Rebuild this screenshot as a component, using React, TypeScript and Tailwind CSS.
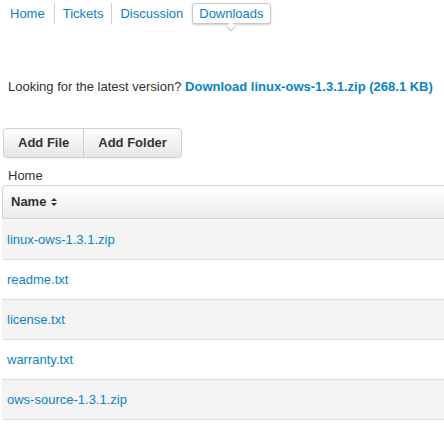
import React from "react";

const files = [
  "linux-ows-1.3.1.zip",
  "readme.txt",
  "license.txt",
  "warranty.txt",
  "ows-source-1.3.1.zip",
];

function SortIcon() {
  return (
    <svg width="6" height="8" viewBox="0 0 6 8" className="ml-[5px]">
      <path d="M3 0 L6 3 L0 3 Z" fill="#333" />
      <path d="M0 5 L6 5 L3 8 Z" fill="#333" />
    </svg>
  );
}

export default function App() {
  return (
    <div className="w-[444px] h-[435px] overflow-hidden bg-white text-[13px] text-[#333] font-['Liberation_Sans',Arial,sans-serif]">
      {/* Tabs */}
      <div className="flex items-center h-[25px] pt-[2px] pl-[10px]">
        <a className="text-[#0a7fc0] pr-[9px] border-r border-[#d0d0d0] h-[21px] leading-[21px]">Home</a>
        <a className="text-[#0a7fc0] px-[8px] border-r border-[#d0d0d0] h-[21px] leading-[21px]">Tickets</a>
        <a className="text-[#0a7fc0] px-[8px] h-[21px] leading-[21px]">Discussion</a>
        <div className="relative ml-[1px]">
          <a className="block text-[#0a7fc0] px-[6px] h-[21px] leading-[20px] border border-[#c8c8c8] rounded-[3px] bg-white shadow-[0_1px_2px_rgba(0,0,0,0.2)]">
            Downloads
          </a>
          <span className="absolute left-1/2 -translate-x-1/2 top-[20px] w-[7px] h-[7px] rotate-45 bg-white border-r border-b border-[#c8c8c8]"></span>
        </div>
      </div>

      {/* Latest version */}
      <div className="mt-[54px] pl-[8px] leading-[16px]">
        Looking for the latest version?{" "}
        <a className="font-bold text-[#0a84c4]">Download linux-ows-1.3.1.zip (268.1 KB)</a>
      </div>

      {/* Buttons */}
      <div className="mt-[33px] ml-[3px] flex w-fit border border-[#d0d0d0] rounded-[4px] bg-gradient-to-b from-white to-[#e6e6e6] shadow-[0_1px_1px_rgba(0,0,0,0.05)]">
        <button className="h-[28px] px-[14px] font-bold text-[#333] border-r border-[#d0d0d0]">Add File</button>
        <button className="h-[28px] px-[14px] font-bold text-[#333]">Add Folder</button>
      </div>

      {/* Breadcrumb */}
      <div className="mt-[8px] pl-[8px] leading-[19px]">Home</div>

      {/* Table */}
      <div className="ml-[2px] w-[460px]">
        <div className="flex items-center h-[34px] pl-[8px] border border-[#d6d6d6] rounded-t-[4px] bg-gradient-to-b from-white to-[#ebebeb] font-bold">
          Name
          <SortIcon />
        </div>
        <div className="h-[1px]" />
        {files.map((f, i) => (
          <div
            key={f}
            className={`flex items-center h-[40px] pl-[5px] border-b border-[#dcdcdc] ${
              i % 2 === 0 ? "bg-[#f4f4f4]" : "bg-white"
            }`}
          >
            <a className="text-[#0a84c4]">{f}</a>
          </div>
        ))}
      </div>
    </div>
  );
}
